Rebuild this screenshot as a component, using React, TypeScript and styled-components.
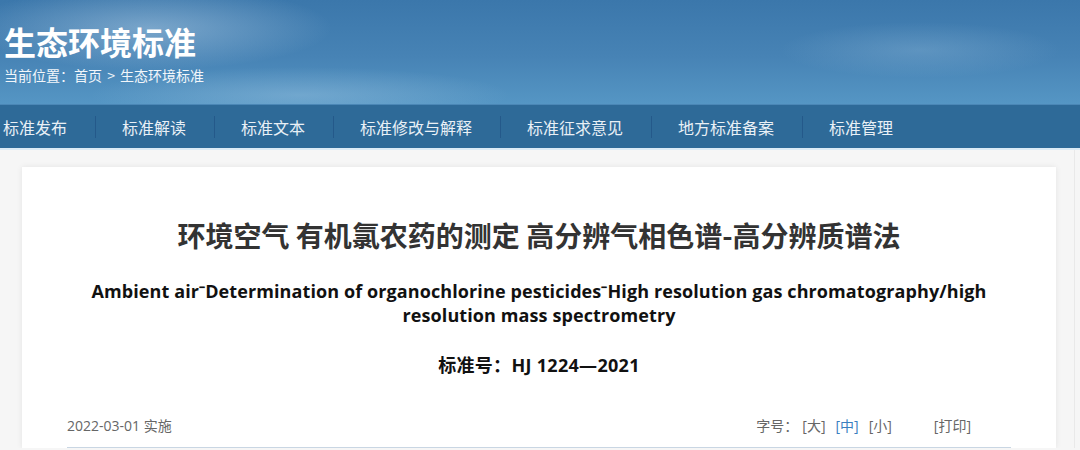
import styled, { createGlobalStyle } from "styled-components";

const GlobalStyle = createGlobalStyle`
  html, body {
    margin: 0;
    padding: 0;
    background: #f6f6f6;
    font-family: "Open Sans", "Noto Sans CJK SC", sans-serif;
  }
`;

const Header = styled.header`
  height: 104px;
  padding: 24px 4px 0;
  box-sizing: border-box;
  color: #fff;
  background:
    radial-gradient(ellipse 260px 60px at 150px 28px, rgba(190, 215, 235, 0.45), transparent 70%),
    radial-gradient(ellipse 300px 40px at 300px 95px, rgba(170, 205, 230, 0.35), transparent 70%),
    radial-gradient(ellipse 200px 40px at 920px 50px, rgba(150, 190, 220, 0.3), transparent 70%),
    linear-gradient(180deg, #3b77ab 0%, #4783b5 55%, #5596c4 100%);
`;

const SiteTitle = styled.h1`
  margin: 0;
  font-size: 32px;
  line-height: 34px;
  font-weight: 700;
  font-family: "Noto Sans CJK SC", sans-serif;
`;

const Crumbs = styled.div`
  margin-top: 7px;
  font-size: 14px;
  line-height: 20px;
  font-family: "Noto Sans CJK SC", sans-serif;
  color: #f2f6fa;
  word-spacing: 2px;
`;

const NavBar = styled.nav`
  height: 43px;
  display: flex;
  align-items: center;
  background: #2e6a98;
  border-top: 1px solid #4b87b6;
  border-bottom: 2px solid #dcebf6;
`;

const NavItem = styled.a<{ $first?: boolean }>`
  display: flex;
  align-items: center;
  height: 22px;
  padding: 0 28px 0 ${(p) => (p.$first ? "3px" : "26px")};
  font-size: 16px;
  font-family: "Noto Sans CJK SC", sans-serif;
  color: #e9f0f6;
  border-right: 1px solid #24598a;
  &:last-child {
    border-right: none;
  }
`;

const Main = styled.main`
  width: 1075px;
  box-sizing: border-box;
  padding: 17px 18px 0 22px;
  border-right: 1px solid #e9e9e9;
`;

const Card = styled.section`
  background: #fff;
  box-shadow: 0 0 6px rgba(0, 0, 0, 0.08);
  padding: 48px 45px 0;
  text-align: center;
`;

const Title = styled.h2`
  margin: 0;
  font-size: 28px;
  line-height: 40px;
  font-weight: 700;
  color: #333;
  font-family: "Noto Sans CJK SC", sans-serif;
`;

const EnTitle = styled.h3`
  margin: 24px 0 0;
  font-size: 18px;
  line-height: 24px;
  font-weight: 700;
  letter-spacing: 0.1px;
  color: #111;
`;

const StdNo = styled.div`
  margin-top: 26px;
  font-size: 18px;
  line-height: 24px;
  font-weight: 700;
  letter-spacing: 0.3px;
  color: #111;
`;

const MetaRow = styled.div`
  margin-top: 39px;
  display: flex;
  justify-content: space-between;
  align-items: center;
  padding: 0 40px 11px 0;
  border-bottom: 1px solid #c9d6e3;
  font-size: 14px;
  line-height: 20px;
  color: #666;
`;

const Tools = styled.div`
  display: flex;
  align-items: center;
`;

const Size = styled.span<{ $active?: boolean }>`
  margin-left: 10px;
  color: ${(p) => (p.$active ? "#3a7fbf" : "#666")};
  &:nth-child(2) {
    margin-left: 4px;
  }
`;

const Print = styled.span`
  margin-left: 42px;
`;

const navItems = ["标准发布", "标准解读", "标准文本", "标准修改与解释", "标准征求意见", "地方标准备案", "标准管理"];

export default function App() {
  return (
    <>
      <GlobalStyle />
      <Header>
        <SiteTitle>生态环境标准</SiteTitle>
        <Crumbs>当前位置：首页 &gt; 生态环境标准</Crumbs>
      </Header>
      <NavBar>
        {navItems.map((n, i) => (
          <NavItem key={n} $first={i === 0}>
            {n}
          </NavItem>
        ))}
      </NavBar>
      <Main>
        <Card>
          <Title>环境空气 有机氯农药的测定 高分辨气相色谱-高分辨质谱法</Title>
          <EnTitle>
            Ambient air⁻Determination of organochlorine pesticides⁻High resolution gas chromatography/high resolution mass spectrometry
          </EnTitle>
          <StdNo>标准号：HJ 1224—2021</StdNo>
          <MetaRow>
            <span>2022-03-01 实施</span>
            <Tools>
              <span>字号：</span>
              <Size>[大]</Size>
              <Size $active>[中]</Size>
              <Size>[小]</Size>
              <Print>[打印]</Print>
            </Tools>
          </MetaRow>
        </Card>
      </Main>
    </>
  );
}
